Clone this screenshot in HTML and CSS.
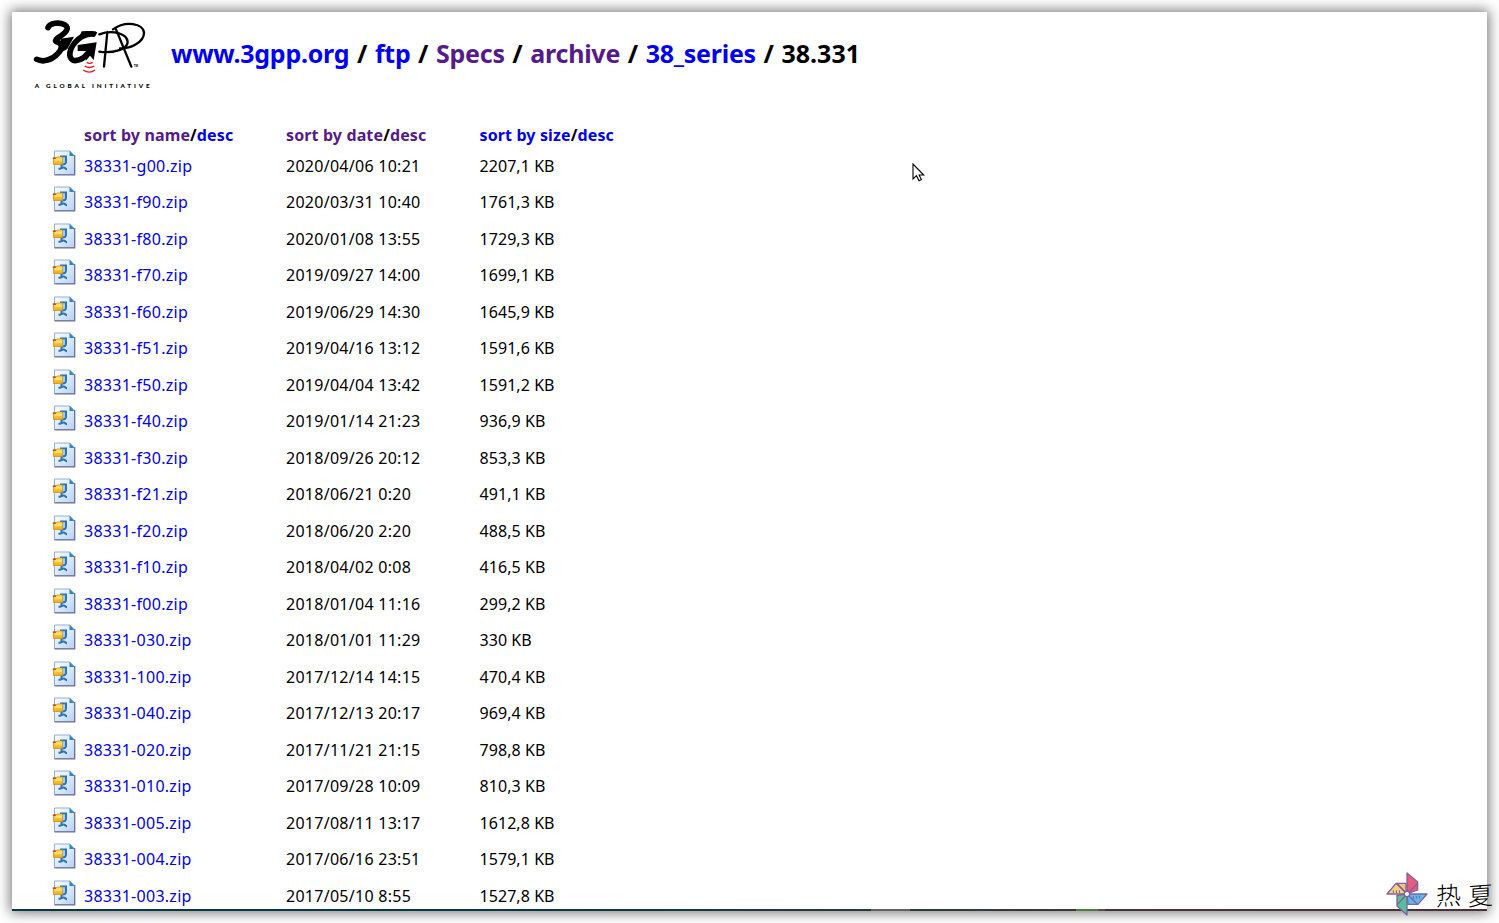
FILE: index.html
```
<!DOCTYPE html>
<html lang="en">
<head>
<meta charset="utf-8">
<title>38.331</title>
<link rel="stylesheet" href="styles.css">
</head>
<body>
<svg width="0" height="0" class="defs">
  <defs>
    <linearGradient id="paper" x1="0" y1="0" x2="1" y2="1"><stop offset="0" stop-color="#f8fcff"/><stop offset=".5" stop-color="#dcebfc"/><stop offset="1" stop-color="#b4d0f6"/></linearGradient>
    <linearGradient id="gold" x1="0" y1="0" x2="0" y2="1"><stop offset="0" stop-color="#ffe45c"/><stop offset="1" stop-color="#f3a812"/></linearGradient>
  </defs>
  <symbol id="zip" viewBox="0 0 24 26">
    <path d="M2.500 1h15.500l4.500 4.800v18.700h-20z" fill="url(#paper)" stroke="#93aed6"/>
    <path d="M22.700 5v19.800H2.500" fill="none" stroke="#726f91" stroke-width="1.300"/>
    <path d="M17.500 1v5h5z" fill="#2f84c6"/>
    <path d="M8 6.500h6v5c0 2-1.500 3-3.500 3M9.500 14v4M6.500 18.800c3 0 3-1.300 5-1.300s2 1.800 3.500 1.800" fill="none" stroke="#2e74b5" stroke-width="2"/>
    <path d="M12 8v5" stroke="#8dc4ef" stroke-width="1.500"/>
    <path d="M1.500 8h2.500l1-1h5.500v7.500h-9z" fill="url(#gold)" stroke="#d3911d" stroke-width=".8"/>
    <path d="M.8 7.300h3v1.700h-3z" fill="#c74c16"/><path d="M3 10h7" stroke="#fff5ae"/>
  </symbol>
</svg>
<main class="page">
  <header class="top">
    <svg class="logo" viewBox="0 6 450 264" role="img" aria-label="3GPP">
      <path d="M84 53C90 38 118 36 134 44C150 53 140 68 113 84C104 91 104 94 114 97C128 102 127 117 114 130C96 150 70 158 50 148" fill="none" stroke="#000" stroke-width="17" stroke-linecap="round" stroke-linejoin="round"/>
      <path d="M226 73C198 66 168 86 153 116C143 143 156 158 179 149C192 144 203 133 211 118" fill="none" stroke="#000" stroke-width="17"/>
      <path d="M122 86L162 80L142 117L120 129ZM173 105L230 97L221 150L210 137L197 153L200 123L173 123Z"/>
      <path d="M185 64Q209 61 232 67L226 79L178 80Z"/>
      <path d="M262 66L252 170M238 73C278 58 321 71 323 96C323 118 278 131 238 125M288 58L334 170M279 58C316 31 371 40 372 69C372 96 332 116 300 115" fill="none" stroke="#000" stroke-width="7" stroke-linecap="round"/>
      <path d="M200 157q9 6 18 0M194 168q14 9 29 0M190 180q18 13 35 0" fill="none" stroke="#e8131b" stroke-width="4"/>
      <text x="341" y="171" class="tm">TM</text>
      <text x="44" y="233" class="motto" textLength="345">A GLOBAL INITIATIVE</text>
    </svg>
    <h1 class="crumbs"><a>www.3gpp.org</a> / <a>ftp</a> / <a class="seen">Specs</a> / <a class="seen">archive</a> / <a>38_series</a> / <span>38.331</span></h1>
  </header>
  <section class="listing" id="listing">
    <div class="row head"><span></span><span><a class="seen">sort by name</a>/<a>desc</a></span><span><a class="seen">sort by date</a>/<a class="seen">desc</a></span><span><a>sort by size</a>/<a>desc</a></span></div>
  </section>
  <div class="strip"></div>
</main>
<svg class="cursor" width="13" height="19" viewBox="0 0 13 19"><path d="M1 1v15l3.500-3.300 2.500 5 2.400-1.200-2.300-4.500h4.600z" fill="#fff" stroke="#000" stroke-width="1.100"/></svg>
<div class="mark">
  <svg width="42" height="44" viewBox="0 0 126 132">
    <g stroke="#80609f" stroke-width="4" stroke-linejoin="round">
      <path d="M63 66V3L95 30V54Z" fill="#e65c7c"/>
      <path d="M63 66L32 34H60V60Z" fill="#f4c477"/>
      <path d="M63 66H3L30 34Z" fill="#f8d07d"/>
      <path d="M63 66H123L96 97H66Z" fill="#5db9ed"/>
      <path d="M63 66V129L33 102V70Z" fill="#58bf9d"/>
      <path d="M63 66L94 35M63 66L34 98M63 66L94 97" fill="none"/>
      <circle cx="63" cy="66" r="8" fill="#fff"/>
    </g>
    <path d="M22 55v8M31 55v8M40 55v8M82 72v8M91 72v8M100 72v8" stroke="#80609f" stroke-width="3"/>
  </svg>
  <div class="brush"><span>热</span><span>夏</span></div>
</div>
<script src="listing.js"></script>
</body>
</html>
```
FILE: styles.css
```
body { margin: 0; width: 1499px; height: 923px; overflow: hidden; background: #fff; color: #000; font-family: "Noto Sans", sans-serif; }
.defs { position: absolute; }
.page { margin: 12px 0 0 12px; width: 1475px; height: 899px; overflow: hidden; background: #fff; box-shadow: 0 0 12px 2px rgba(0,0,0,.52); display: flex; flex-direction: column; }
.top { display: flex; height: 108px; flex: none; }
.logo { width: 150px; height: 88px; margin-left: 8px; flex: none; }
.tm { font: bold 9px "Liberation Sans", sans-serif; }
.motto { font: 900 19px Lato, sans-serif; }
a { color: #0000ee; }
.seen { color: #551a8b; }
.crumbs { margin: 23px 0 0 1px; font-size: 25px; line-height: 36px; font-weight: 700; white-space: nowrap; word-spacing: 1.1px; }
.crumbs a { letter-spacing: -.25px; }
.listing { flex: 1; min-height: 0; overflow: hidden; }
.row { display: grid; grid-template-columns: 32px 202px 193.500px 200px; height: 36.500px; margin-left: 40px; align-items: center; font-size: 16px; line-height: 24px; letter-spacing: .27px; white-space: nowrap; }
.row > :last-child { letter-spacing: .06px; }
.head { height: 27.250px; padding-top: 0; line-height: 26px; }
.head, .head > :last-child { font-weight: 700; letter-spacing: .13px; }
.head > span { margin-top: 2px; }
.icon { width: 24px; height: 26px; display: block; margin-top: -6px; }
.strip { flex: none; height: 2px; background: linear-gradient(90deg, transparent 859px, #60635f 859px 898px, transparent 898px 1064px, #4c7e42 1064px 1086px, #55504b 1086px 1093px, transparent 1093px), linear-gradient(90deg, #063943 0, #063943 35%, #333b38 65%, #49313a 85%, #4b303a); }
.cursor { position: absolute; left: 912px; top: 163px; }
.mark { position: absolute; left: 1386px; top: 872px; display: flex; gap: 8px; }
.brush { display: flex; gap: 7px; margin-top: 2px; font: 300 25px/40px "Noto Sans CJK SC", sans-serif; }
.brush span { transform: skewY(-4deg); }
```
FILE: listing.js
```
const files = [
  ["g00", "2020/04/06 10:21", "2207,1"], ["f90", "2020/03/31 10:40", "1761,3"],
  ["f80", "2020/01/08 13:55", "1729,3"], ["f70", "2019/09/27 14:00", "1699,1"],
  ["f60", "2019/06/29 14:30", "1645,9"], ["f51", "2019/04/16 13:12", "1591,6"],
  ["f50", "2019/04/04 13:42", "1591,2"], ["f40", "2019/01/14 21:23", "936,9"],
  ["f30", "2018/09/26 20:12", "853,3"], ["f21", "2018/06/21 0:20", "491,1"],
  ["f20", "2018/06/20 2:20", "488,5"], ["f10", "2018/04/02 0:08", "416,5"],
  ["f00", "2018/01/04 11:16", "299,2"], ["030", "2018/01/01 11:29", "330"],
  ["100", "2017/12/14 14:15", "470,4"], ["040", "2017/12/13 20:17", "969,4"],
  ["020", "2017/11/21 21:15", "798,8"], ["010", "2017/09/28 10:09", "810,3"],
  ["005", "2017/08/11 13:17", "1612,8"], ["004", "2017/06/16 23:51", "1579,1"],
  ["003", "2017/05/10 8:55", "1527,8"]
];
document.getElementById("listing").insertAdjacentHTML("beforeend", files.map(([v, date, size]) =>
  `<div class="row"><svg class="icon"><use href="#zip"/></svg><a>38331-${v}.zip</a><span>${date}</span><span>${size} KB</span></div>`).join(""));
```
